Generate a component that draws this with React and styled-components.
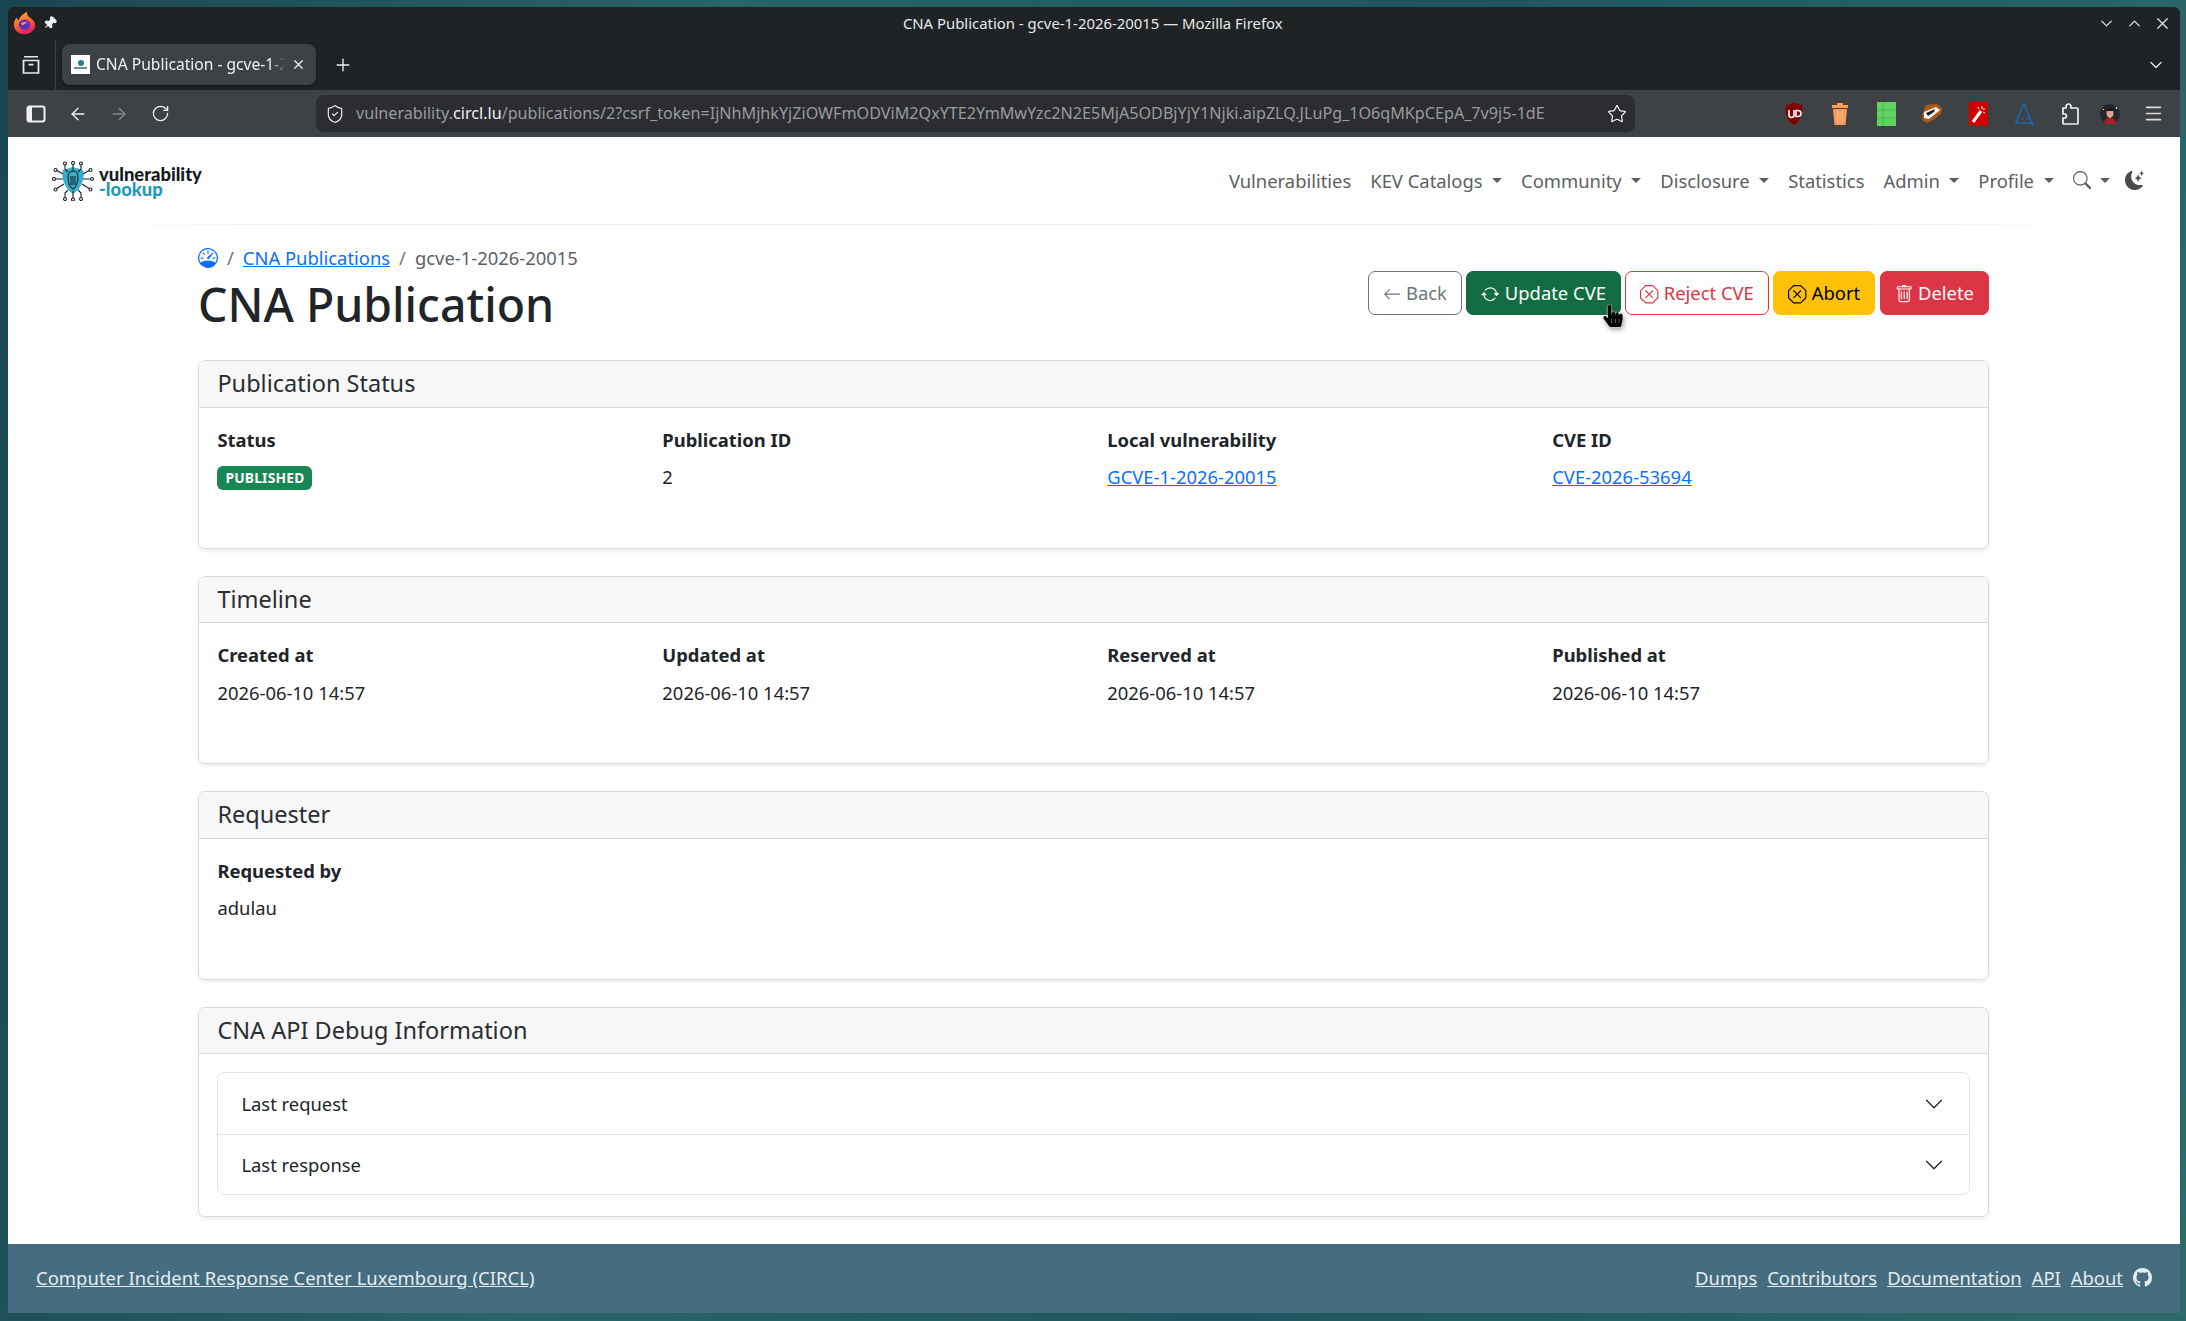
import React from "react";
import styled, { createGlobalStyle } from "styled-components";
import {
  ArrowLeft,
  ArrowRight,
  ChevronDown,
  ChevronUp,
  Menu,
  Pin,
  Plus,
  RotateCw,
  ShieldCheck,
  Star,
  X,
} from "lucide-react";
import {
  BsArrowLeft,
  BsArrowRepeat,
  BsChevronDown,
  BsGithub,
  BsMoonStarsFill,
  BsSearch,
  BsSpeedometer,
  BsTrash,
  BsXOctagon,
} from "react-icons/bs";
import { FaHandPointer } from "react-icons/fa";

const GlobalStyle = createGlobalStyle`
  html, body {
    margin: 0;
    padding: 0;
    height: 100%;
    overflow: hidden;
  }
  * { box-sizing: border-box; }
  body {
    font-family: "Noto Sans", "Open Sans", sans-serif;
    font-size: 18.4px;
    line-height: 1.5;
    color: #212529;
  }
`;

const FirefoxLogo = () => (
  <svg width="23" height="24" viewBox="0 0 26 30" preserveAspectRatio="none">
    <defs>
      <linearGradient id="ffg" x1="0" y1="0" x2="0.4" y2="1">
        <stop offset="0" stopColor="#ffbd2e" />
        <stop offset="0.55" stopColor="#ff6b2c" />
        <stop offset="1" stopColor="#e3245a" />
      </linearGradient>
    </defs>
    <path d="M13 29C6 29 1 24 1 17C1 13 2.500 10 4.500 8C4.500 10 5.500 11 6.500 11.500C7.500 7 11 4 16 1C15.500 4 16.500 6 19 8C23 11 25 14 25 17.500C25 24 20 29 13 29Z" fill="url(#ffg)" />
    <circle cx="13" cy="17" r="6.500" fill="#5b2fc0" />
    <path d="M9 15.500C11 13 15 13 17 15.500C15 14.800 13 15.500 12 17.500C10.500 17.500 9.500 16.800 9 15.500Z" fill="#ff9a3c" />
  </svg>
);

const ViewIcon = () => (
  <svg width="20" height="20" viewBox="0 0 20 24" preserveAspectRatio="none" fill="none" stroke="#e8e8e8" strokeWidth="1.800">
    <path d="M3 2h14M2.500 6.500h15v15h-15z" />
    <path d="M7.500 11.500h5" strokeWidth="2" />
  </svg>
);

const SidebarIcon = () => (
  <svg width="20" height="20" viewBox="0 0 20 20">
    <rect x="1.500" y="2.500" width="17" height="15" rx="2" fill="none" stroke="#f0f0f0" strokeWidth="2" />
    <rect x="2" y="3" width="4" height="14" fill="#f0f0f0" />
  </svg>
);

const PuzzleIcon = () => (
  <svg width="21" height="24" viewBox="0 0 21 24" fill="none" stroke="#f0f0f0" strokeWidth="1.700">
    <path d="M11 6V4.500a2.500 2.500 0 0 0-5 0V6H3v6h1.500a2 2 0 0 1 0 4H3v5a1 1 0 0 0 1 1h13a1 1 0 0 0 1-1V7a1 1 0 0 0-1-1z" />
  </svg>
);

const UblockIcon = () => (
  <svg width="20" height="24" viewBox="0 0 20 24">
    <path d="M10 1L18.500 3.500C18.500 13 17 19 10 23C3 19 1.500 13 1.500 3.500Z" fill="#800000" />
    <path d="M5 8v5a2.500 2.500 0 0 0 5 0V8M12 8.500h2a3 3 0 0 1 0 6h-2z" fill="none" stroke="#fff" strokeWidth="1.600" />
  </svg>
);

const TrashExt = () => (
  <svg width="18" height="24" viewBox="0 0 18 24">
    <path d="M6 1h6v2h5v3H1V3h5z" fill="#ff9f5a" />
    <path d="M2 7h14l-1.500 16h-11z" fill="#ff9a55" />
    <path d="M6.500 9v12M9 9v12M11.500 9v12" stroke="#ffbf90" strokeWidth="1" />
  </svg>
);

const SheetExt = () => (
  <svg width="19" height="24" viewBox="0 0 19 24">
    <rect width="19" height="24" fill="#5fd35f" />
    <path d="M0 8h19M0 16h19M6 0v24" stroke="#4cb34c" strokeWidth="1" />
  </svg>
);

const BadgerExt = () => (
  <svg width="22" height="22" viewBox="0 0 22 22">
    <path d="M5 2L16 1L21 5L20 10L14 16L6 20L2 18L1 12Z" fill="#a85a1c" />
    <path d="M3 9L15 4L19 7L8 16L3 15Z" fill="#f4f4f4" />
    <path d="M5 10L14 6L13 9L7 13Z" fill="#1e1e1e" />
  </svg>
);

const WandExt = () => (
  <svg width="19" height="24" viewBox="0 0 19 24">
    <rect width="19" height="24" fill="#d00000" />
    <path d="M4 20L12 9" stroke="#fff" strokeWidth="3" />
    <path d="M13 4v3M16 7h-2M16 11l-2-1M9 5l1 2" stroke="#fff" strokeWidth="1" />
  </svg>
);

const TriangleExt = () => (
  <svg width="20" height="24" viewBox="0 0 20 24" fill="none" stroke="#1669bb" strokeWidth="1.400">
    <path d="M10 2L1.500 21H17" />
    <path d="M10 2L17.500 20" />
    <circle cx="18" cy="21.500" r="1.300" />
    <path d="M7 15l3 3M10 15l-3 3M12 15l3 3M15 15l-3 3" strokeWidth="0.800" />
  </svg>
);

const AvatarExt = () => (
  <svg width="20" height="20" viewBox="0 0 20 20">
    <circle cx="10" cy="10" r="10" fill="#22282c" />
    <path d="M4 20c0-5 3-6 6-6s6 1 6 6z" fill="#a81c24" />
    <ellipse cx="10" cy="9" rx="3.500" ry="5" fill="#d9a78c" />
    <path d="M6 6c1-3 7-3 8 0l-1 1H7z" fill="#1a1a1a" />
    <path d="M16 3l1 2M3 5l1 1" stroke="#fff" strokeWidth="1" />
  </svg>
);

const BugLogo = () => (
  <svg width="42" height="40" viewBox="0 0 42 40" fill="none" stroke="#1c2326" strokeWidth="1.100">
    <path d="M21 6L31 9C33 16 30 27 21 33C12 27 9 16 11 9Z" fill="#35aed0" stroke="none" />
    <path d="M21 1v9M13 2v6l3 3M29 2v6l-3 3M4 9l7 4M38 9l-7 4M2 18h9M40 18h-9M4 28l8-5M38 28l-8-5M13 38v-6l3-3M29 38v-6l-3-3M21 39v-9" />
    <circle cx="21" cy="2" r="1.500" fill="#fff" />
    <circle cx="13" cy="2.500" r="1.500" fill="#fff" />
    <circle cx="29" cy="2.500" r="1.500" fill="#fff" />
    <circle cx="3.500" cy="9" r="1.500" fill="#fff" />
    <circle cx="38.500" cy="9" r="1.500" fill="#fff" />
    <circle cx="2" cy="18" r="1.500" fill="#fff" />
    <circle cx="40" cy="18" r="1.500" fill="#fff" />
    <circle cx="3.500" cy="28.500" r="1.500" fill="#fff" />
    <circle cx="38.500" cy="28.500" r="1.500" fill="#fff" />
    <circle cx="13" cy="38" r="1.500" fill="#fff" />
    <circle cx="29" cy="38" r="1.500" fill="#fff" />
    <circle cx="21" cy="38.500" r="1.500" fill="#fff" />
    <path d="M21 10c4 0 5 3 5 7s-2 10-5 11c-3-1-5-7-5-11s1-7 5-7zM19 15v9M23 15v9M21 15v9" />
  </svg>
);

const Crumb = styled(BsSpeedometer)`
  color: #0d6efd;
  font-size: 20px;
  display: block;
`;

const navItems = [
  { label: "Vulnerabilities" },
  { label: "KEV Catalogs", caret: true },
  { label: "Community", caret: true },
  { label: "Disclosure", caret: true },
  { label: "Statistics" },
  { label: "Admin", caret: true },
  { label: "Profile", caret: true },
];

const extensions = [UblockIcon, TrashExt, SheetExt, BadgerExt, WandExt, TriangleExt];

const sections = [
  {
    title: "Publication Status",
    fields: [
      { label: "Status", badge: "PUBLISHED" },
      { label: "Publication ID", value: "2" },
      { label: "Local vulnerability", link: "GCVE-1-2026-20015" },
      { label: "CVE ID", link: "CVE-2026-53694" },
    ],
  },
  {
    title: "Timeline",
    fields: [
      { label: "Created at", value: "2026-06-10 14:57" },
      { label: "Updated at", value: "2026-06-10 14:57" },
      { label: "Reserved at", value: "2026-06-10 14:57" },
      { label: "Published at", value: "2026-06-10 14:57" },
    ],
  },
  {
    title: "Requester",
    fields: [{ label: "Requested by", value: "adulau" }],
  },
];

const footerLinks = ["Dumps", "Contributors", "Documentation", "API", "About"];

const App = () => {
  return (
    <Desktop>
      <GlobalStyle />
      <Window>
        <TitleBar>
          <TitleLeft>
            <FirefoxLogo />
            <Pin size={14} color="#f0f0f0" fill="#f0f0f0" style={{ transform: "rotate(45deg)" }} />
          </TitleLeft>
          <TitleText>CNA Publication - gcve-1-2026-20015 — Mozilla Firefox</TitleText>
          <WindowControls>
            <ChevronDown size={19} strokeWidth={1.5} />
            <ChevronUp size={19} strokeWidth={1.5} />
            <X size={19} strokeWidth={1.5} />
          </WindowControls>
        </TitleBar>

        <TabStrip>
          <ViewSlot>
            <ViewIcon />
          </ViewSlot>
          <Tab>
            <Favicon>
              <FaviconDot />
              <FaviconLine />
            </Favicon>
            <TabLabel>CNA Publication - gcve-1-2026-20015</TabLabel>
            <X size={15} color="#f0f0f0" />
          </Tab>
          <NewTab>
            <Plus size={20} color="#f0f0f0" strokeWidth={1.6} />
          </NewTab>
          <TabStripEnd>
            <ChevronDown size={20} color="#e8e8e8" strokeWidth={1.5} />
          </TabStripEnd>
        </TabStrip>

        <Toolbar>
          <ToolGroup>
            <SidebarIcon />
            <ArrowLeft size={20} color="#f0f0f0" strokeWidth={1.6} />
            <ArrowRight size={20} color="#85888a" strokeWidth={1.6} />
            <RotateCw size={19} color="#f0f0f0" strokeWidth={1.6} />
          </ToolGroup>
          <UrlBar>
            <ShieldCheck size={20} color="#e8e8e8" strokeWidth={1.5} />
            <UrlText>
              vulnerability.<UrlHost>circl.lu</UrlHost>/publications/2?csrf_token=IjNhMjhkYjZiOWFmODViM2QxYTE2YmMwYzc2N2E5MjA5ODBjYjY1Njki.aipZLQ.JLuPg_1O6qMKpCEpA_7v9j5-1dE
            </UrlText>
            <Star size={20} color="#f0f0f0" strokeWidth={1.5} />
          </UrlBar>
          <ExtensionRow>
            {extensions.map((Icon, i) => (
              <ExtSlot key={i}>
                <Icon />
              </ExtSlot>
            ))}
            <ExtSlot>
              <PuzzleIcon />
            </ExtSlot>
            <ExtSlot $w={34}>
              <AvatarExt />
            </ExtSlot>
            <ExtSlot $w={52}>
              <Menu size={21} color="#dcdcdc" strokeWidth={1.8} />
            </ExtSlot>
          </ExtensionRow>
        </Toolbar>

        <Page>
          <Navbar>
            <Brand>
              <BugLogo />
              <BrandText>
                <BrandTop>vulnerability</BrandTop>
                <BrandBottom>-lookup</BrandBottom>
              </BrandText>
            </Brand>
            <NavList>
              {navItems.map((item) => (
                <NavLink key={item.label}>
                  {item.label}
                  {item.caret && <Caret />}
                </NavLink>
              ))}
              <NavLink>
                <BsSearch size={18} />
                <Caret />
              </NavLink>
              <MoonLink>
                <BsMoonStarsFill size={19} />
              </MoonLink>
            </NavList>
          </Navbar>
          <NavRule />

          <Main>
            <HeadRow>
              <div>
                <Breadcrumb>
                  <Crumb />
                  <Slash>/</Slash>
                  <TextLink>CNA Publications</TextLink>
                  <Slash>/</Slash>
                  <span>gcve-1-2026-20015</span>
                </Breadcrumb>
                <Heading>CNA Publication</Heading>
              </div>
              <Actions>
                <Button $color="#6c757d" $outline>
                  <BsArrowLeft /> Back
                </Button>
                <Button $color="#146c43">
                  <BsArrowRepeat /> Update CVE
                </Button>
                <Button $color="#dc3545" $outline>
                  <BsXOctagon /> Reject CVE
                </Button>
                <Button $color="#ffc107" $text="#000">
                  <BsXOctagon /> Abort
                </Button>
                <Button $color="#dc3545">
                  <BsTrash /> Delete
                </Button>
                <Cursor>
                  <FaHandPointer />
                </Cursor>
              </Actions>
            </HeadRow>

            {sections.map((section) => (
              <Card key={section.title}>
                <CardHeader>{section.title}</CardHeader>
                <CardBody>
                  <FieldGrid>
                    {section.fields.map((field) => (
                      <div key={field.label}>
                        <FieldLabel>{field.label}</FieldLabel>
                        <FieldValue>
                          {field.badge && <Badge>{field.badge}</Badge>}
                          {field.value}
                          {field.link && <TextLink>{field.link}</TextLink>}
                        </FieldValue>
                      </div>
                    ))}
                  </FieldGrid>
                </CardBody>
              </Card>
            ))}

            <Card>
              <CardHeader>CNA API Debug Information</CardHeader>
              <DebugBody>
                <Accordion>
                  <AccordionRow>
                    Last request
                    <BsChevronDown size={20} />
                  </AccordionRow>
                  <AccordionRow>
                    Last response
                    <BsChevronDown size={20} />
                  </AccordionRow>
                </Accordion>
              </DebugBody>
            </Card>
          </Main>

          <Footer>
            <FooterBrand>Computer Incident Response Center Luxembourg (CIRCL)</FooterBrand>
            <FooterLinks>
              {footerLinks.map((link) => (
                <FooterLink key={link}>{link}</FooterLink>
              ))}
              <BsGithub size={19} />
            </FooterLinks>
          </Footer>
        </Page>
      </Window>
    </Desktop>
  );
};

export default App;

const Desktop = styled.div`
  width: 100vw;
  height: 100vh;
  padding: 7px 6px 8px 8px;
  background: linear-gradient(100deg, #1a4652 0%, #2a6468 30%, #1f5560 60%, #2d6a6a 100%);
  overflow: hidden;
`;

const Window = styled.div`
  height: 100%;
  display: flex;
  flex-direction: column;
  border-radius: 6px 6px 0 0;
  overflow: hidden;
  background: #1f2326;
`;

const TitleBar = styled.div`
  height: 32px;
  flex: none;
  display: flex;
  align-items: center;
  justify-content: space-between;
  padding: 0 8px 0 5px;
  position: relative;
`;

const TitleLeft = styled.div`
  display: flex;
  align-items: center;
  gap: 7px;
`;

const TitleText = styled.div`
  position: absolute;
  left: 0;
  right: 0;
  text-align: center;
  font-size: 14.9px;
  color: #e8e8e8;
  padding-right: 2.500px;
`;

const WindowControls = styled.div`
  display: flex;
  gap: 9px;
  color: #e8e8e8;
`;

const TabStrip = styled.div`
  height: 51px;
  flex: none;
  display: flex;
  align-items: center;
  gap: 14px;
  padding: 0 14px 0 0;
`;

const ViewSlot = styled.div`
  width: 48px;
  height: 100%;
  margin-right: -8px;
  display: flex;
  align-items: center;
  justify-content: center;
  border-right: 1px solid #3c4043;
  padding-right: 2px;
`;

const Tab = styled.div`
  width: 254px;
  height: 41px;
  padding: 0 10px 0 9px;
  display: flex;
  align-items: center;
  gap: 6px;
  background: #3f4245;
  border-radius: 8px;
  box-shadow: 0 1px 3px rgba(0, 0, 0, 0.5);
`;

const Favicon = styled.div`
  width: 19px;
  height: 19px;
  flex: none;
  background: #fff;
  display: flex;
  flex-direction: column;
  gap: 1px;
  align-items: center;
  justify-content: center;
`;

const FaviconDot = styled.div`
  width: 6px;
  height: 6px;
  border-radius: 50%;
  background: #1f7f95;
`;

const FaviconLine = styled.div`
  width: 13px;
  height: 2px;
  background: #6f8a94;
`;

const TabLabel = styled.div`
  flex: 1;
  min-width: 0;
  overflow: hidden;
  white-space: nowrap;
  font-size: 15.6px;
  color: #f0f0f0;
  mask-image: linear-gradient(90deg, #000 92%, transparent);
`;

const NewTab = styled.div`
  display: flex;
  margin-left: 3px;
`;

const TabStripEnd = styled.div`
  margin-left: auto;
  display: flex;
`;

const Toolbar = styled.div`
  height: 47px;
  flex: none;
  display: flex;
  align-items: center;
  background: #3f4245;
  padding: 0 0 0 18px;
`;

const ToolGroup = styled.div`
  width: 290px;
  flex: none;
  display: flex;
  align-items: center;
  gap: 21.500px;
`;

const UrlBar = styled.div`
  width: 1319px;
  flex: none;
  height: 37px;
  display: flex;
  align-items: center;
  padding: 0 8px 0 9px;
  background: #2b2d30;
  border-radius: 8px;
`;

const UrlText = styled.div`
  flex: 1;
  margin-left: 11px;
  white-space: nowrap;
  overflow: hidden;
  font-size: 16.15px;
  color: #9a9c9e;
`;

const UrlHost = styled.span`
  color: #f0f0f0;
`;

const ExtensionRow = styled.div`
  margin-left: 136px;
  display: flex;
  align-items: center;
`;

const ExtSlot = styled.div`
  width: ${(p) => p.$w || 46}px;
  flex: none;
  display: flex;
  justify-content: center;
  align-items: center;
`;

const Page = styled.div`
  flex: 1;
  min-height: 0;
  display: flex;
  flex-direction: column;
  background: #fff;
`;

const Navbar = styled.div`
  height: 87px;
  flex: none;
  display: flex;
  align-items: center;
  justify-content: space-between;
  padding: 0 25.500px 0 44px;
`;

const Brand = styled.div`
  display: flex;
  align-items: center;
  gap: 5px;
`;

const BrandText = styled.div`
  display: flex;
  flex-direction: column;
  font-family: "Lato", "Noto Sans", sans-serif;
  font-weight: 900;
  font-size: 18.4px;
  line-height: 14.500px;
  margin-top: 2px;
`;

const BrandTop = styled.span`
  color: #15191c;
`;

const BrandBottom = styled.span`
  color: #1b9ab8;
`;

const NavList = styled.div`
  display: flex;
  align-items: center;
`;

const NavLink = styled.div`
  display: flex;
  align-items: center;
  padding: 0 9.500px;
  color: #5c5f62;
  white-space: nowrap;
`;

const MoonLink = styled(NavLink)`
  padding: 0 11px 0 5px;
  color: #4a4d50;
`;

const Caret = styled.span`
  display: inline-block;
  margin-left: 9.500px;
  border-top: 5.500px solid currentColor;
  border-left: 5.500px solid transparent;
  border-right: 5.500px solid transparent;
`;

const NavRule = styled.div`
  height: 1px;
  flex: none;
  background: linear-gradient(90deg, transparent 3%, #eceeef 15%, #eceeef 85%, transparent 97%);
`;

const Main = styled.main`
  flex: 1;
  min-height: 0;
  padding: 19px 191px 0 190px;
  display: flex;
  flex-direction: column;
`;

const HeadRow = styled.div`
  display: flex;
  justify-content: space-between;
  align-items: flex-start;
  height: 116px;
`;

const Breadcrumb = styled.div`
  display: flex;
  align-items: center;
  gap: 9px;
  color: #5c6166;
`;

const Slash = styled.span`
  color: #6c757d;
`;

const TextLink = styled.a`
  color: #0d6efd;
  text-decoration: underline;
`;

const Heading = styled.h1`
  margin: 0;
  font-size: 46.400px;
  font-weight: 500;
  line-height: 1.200;
  color: #212529;
  margin-top: 5px;
`;

const Actions = styled.div`
  display: flex;
  gap: 4.500px;
  margin-top: 26.500px;
  position: relative;
`;

const Button = styled.button`
  height: 44px;
  padding: 0 14px;
  display: inline-flex;
  align-items: center;
  gap: 5px;
  font: inherit;
  border-radius: 7px;
  white-space: nowrap;
  border: 1.400px solid ${(p) => p.$color};
  background: ${(p) => (p.$outline ? "#fff" : p.$color)};
  color: ${(p) => (p.$outline ? p.$color : p.$text || "#fff")};
  svg {
    transform: translateY(2px);
  }
`;

const Cursor = styled.div`
  position: absolute;
  left: 234px;
  top: 34px;
  font-size: 22px;
  line-height: 1;
  color: #000;
  filter: drop-shadow(0 0 1px #fff) drop-shadow(1px 2px 2px rgba(0, 0, 0, 0.4));
`;

const Card = styled.section`
  margin-bottom: 27px;
  border: 1px solid #d9dadb;
  border-radius: 7px;
  box-shadow: 0 2px 4px rgba(0, 0, 0, 0.075);
  overflow: hidden;
`;

const CardHeader = styled.div`
  height: 46.500px;
  padding: 0 18.400px;
  display: flex;
  align-items: center;
  font-size: 23.500px;
  font-weight: 400;
  background: #f7f7f7;
  border-bottom: 1px solid #d9dadb;
  color: #2a2e32;
`;

const CardBody = styled.div`
  padding: 18.400px 18.400px 0;
  height: 140px;
`;

const FieldGrid = styled.div`
  display: grid;
  grid-template-columns: repeat(4, 1fr);
  column-gap: 27.600px;
`;

const FieldLabel = styled.div`
  font-weight: 700;
  margin-bottom: 9.500px;
`;

const FieldValue = styled.div`
  display: flex;
  align-items: center;
  height: 27.600px;
`;

const Badge = styled.span`
  display: inline-block;
  margin-top: 3px;
  padding: 0 8px;
  height: 24px;
  line-height: 24px;
  font-size: 13.800px;
  font-weight: 700;
  color: #fff;
  background: #198754;
  border-radius: 6px;
  letter-spacing: 0.2px;
`;

const DebugBody = styled.div`
  padding: 18.400px 18.400px 20.500px;
`;

const Accordion = styled.div`
  border: 1px solid #e2e4e6;
  border-radius: 7px;
`;

const AccordionRow = styled.div`
  height: 60.500px;
  padding: 0 25px 0 23px;
  display: flex;
  align-items: center;
  justify-content: space-between;
  & + & {
    border-top: 1px solid #e2e4e6;
  }
`;

const Footer = styled.footer`
  height: 69px;
  flex: none;
  display: flex;
  align-items: center;
  justify-content: space-between;
  padding: 0 28px 2px 28px;
  background: #456c7f;
  color: #e6edf1;
`;

const FooterLink = styled.a`
  color: #e6edf1;
  text-decoration: underline;
  white-space: nowrap;
`;

const FooterBrand = styled(FooterLink)`
  letter-spacing: 0.055px;
`;

const FooterLinks = styled.div`
  display: flex;
  align-items: center;
  gap: 10px;
`;
